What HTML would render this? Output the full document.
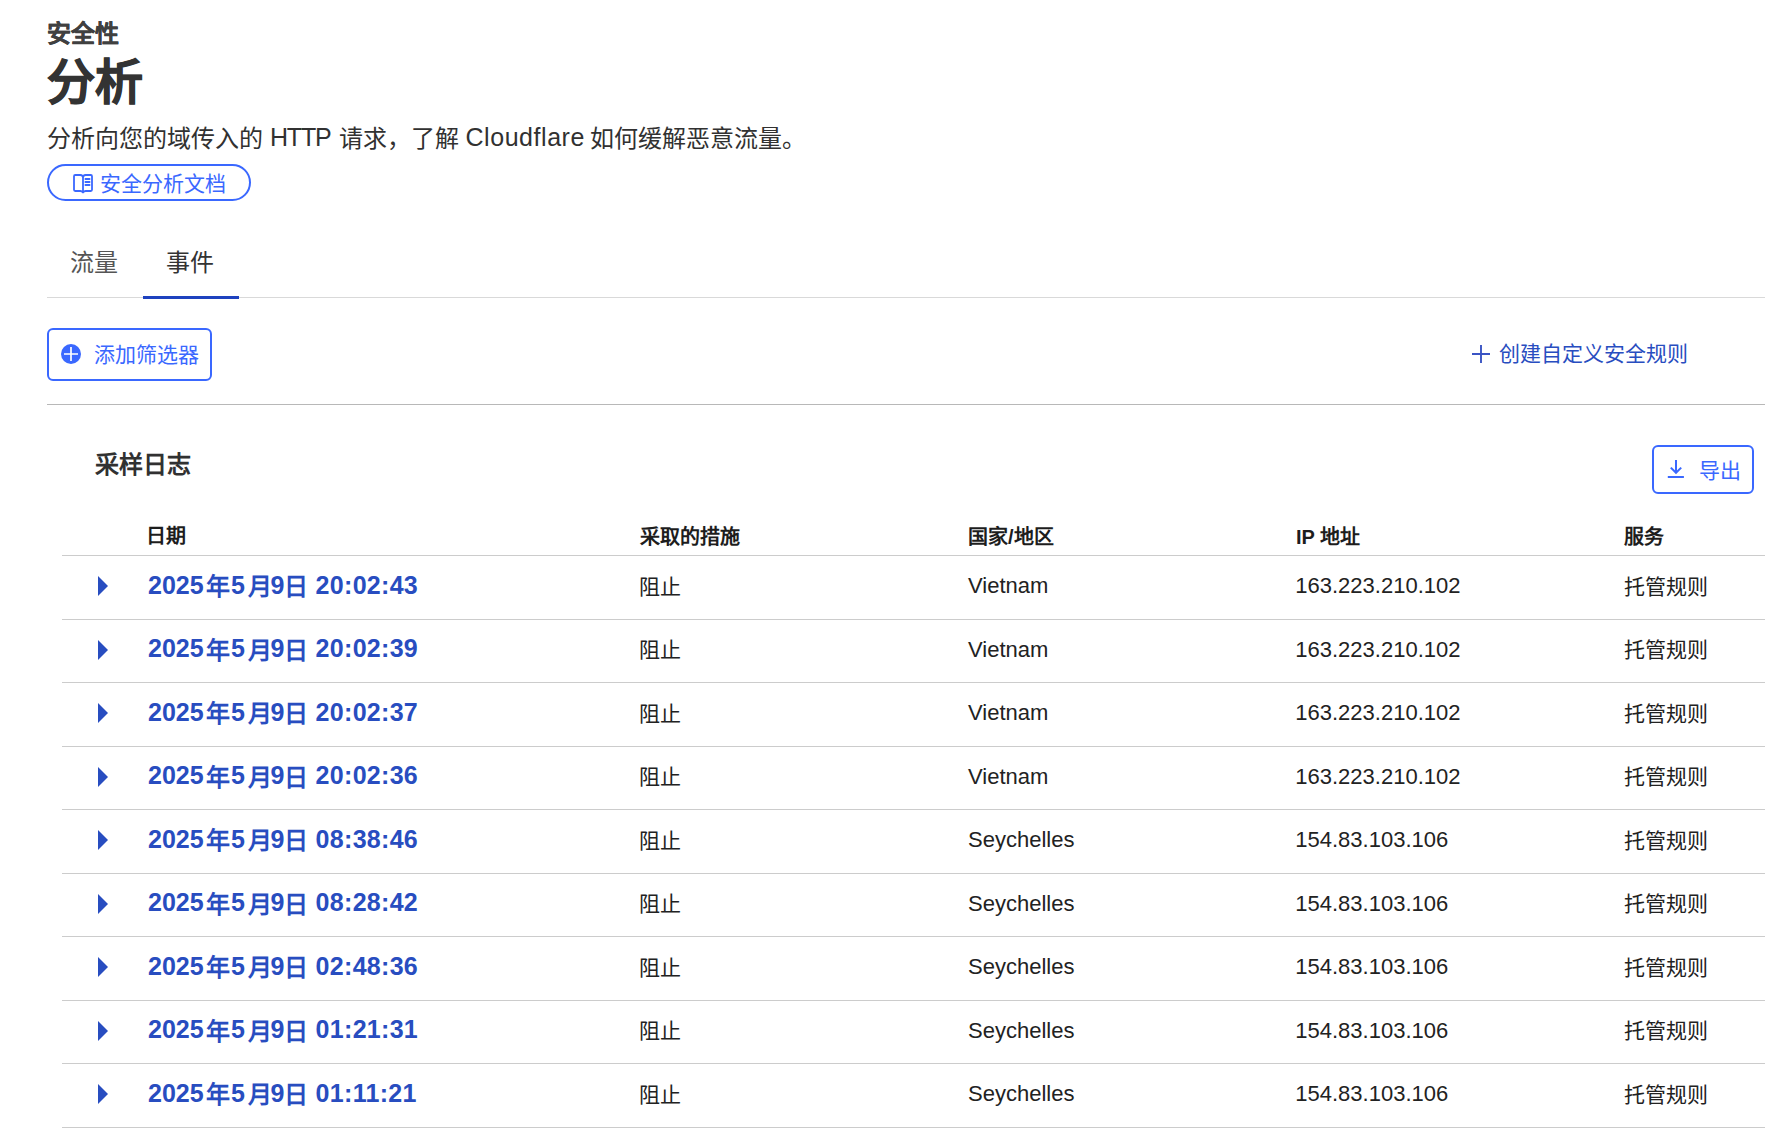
<!DOCTYPE html>
<html lang="zh-CN">
<head>
<meta charset="utf-8">
<style>
html,body{margin:0;padding:0;background:#fff;}
body{width:1765px;height:1138px;overflow:hidden;position:relative;font-family:"Liberation Sans",sans-serif;color:#313131;}
.a{position:absolute;white-space:nowrap;}
.s24{font-size:24px;line-height:30px;}
.s21{font-size:21px;line-height:26px;}
.b{font-weight:bold;}
.btn{position:absolute;box-sizing:border-box;border:2px solid #3a68ff;}
.blue{color:#3a68ff;}
.dk{color:#284dc0;}
.th{font-size:20px;line-height:26px;font-weight:bold;color:#1d1d1d;}
.ln{position:absolute;height:1px;background:#cccccc;}
.dg{font-size:25px;line-height:30px;font-weight:bold;color:#284dc0;}
.dc{font-size:24px;line-height:30px;font-weight:bold;color:#284dc0;}
.ct{font-size:21px;line-height:26px;color:#222;}
.lt{font-size:22px;line-height:26px;color:#222;}
.caret{position:absolute;width:0;height:0;border-top:10px solid transparent;border-bottom:10px solid transparent;border-left:10.5px solid #284dc0;}
</style>
</head>
<body>
<div class="a s24 b" style="left:46.5px;top:19px;color:#404040;-webkit-text-stroke:0.3px #404040">安全性</div>
<div class="a b" style="left:47px;top:53px;font-size:48px;line-height:60px;color:#333;-webkit-text-stroke:0.9px #333">分析</div>
<div class="a s24" style="left:46.9px;top:124px;">分析向您的域传入的</div>
<div class="a " style="left:270px;top:122px;font-size:25px;line-height:30px;letter-spacing:-1.2px">HTTP</div>
<div class="a s24" style="left:339.3px;top:124px;">请求，了解</div>
<div class="a " style="left:465.5px;top:122px;font-size:25px;line-height:30px;letter-spacing:0.55px">Cloudflare</div>
<div class="a s24" style="left:590px;top:124px;">如何缓解恶意流量。</div>
<div class="btn" style="left:47px;top:164px;width:204px;height:37px;border-radius:19px"></div>
<svg class="a" style="left:73px;top:174px" width="20" height="20" viewBox="0 0 20 20" fill="none" stroke="#3a68ff" stroke-width="1.8" stroke-linejoin="round" stroke-linecap="round"><path d="M10 3.6Q10 1 7.4 1H2.2Q1 1 1 2.2V15.8Q1 17 2.2 17H7.4Q8.8 17 10 18.4Q11.2 17 12.6 17H17.8Q19 17 19 15.8V2.2Q19 1 17.8 1H12.6Q10 1 10 3.6V18.4"/><path d="M12.4 5H16.6M12.4 8H16.6M12.4 11H16.6"/></svg>
<div class="a s21 blue" style="left:100.2px;top:171.4px;">安全分析文档</div>
<div class="a s24" style="left:70.3px;top:248px;color:#555">流量</div>
<div class="a s24" style="left:166px;top:248px;color:#333">事件</div>
<div class="ln" style="left:47px;top:297px;width:1718px;background:#d9d9d9"></div>
<div class="a" style="left:143px;top:296px;width:96px;height:3px;background:#1e42bf"></div>
<div class="btn" style="left:47px;top:328px;width:165px;height:53px;border-radius:6px"></div>
<svg class="a" style="left:61px;top:344px" width="20" height="20" viewBox="0 0 20 20"><circle cx="10" cy="10" r="10" fill="#3a68ff"/><path d="M10 3v14M3 10h14" stroke="#fff" stroke-width="1.7"/></svg>
<div class="a s21 blue" style="left:94px;top:342px;">添加筛选器</div>
<svg class="a" style="left:1472px;top:345px" width="18" height="18" viewBox="0 0 18 18"><path d="M9 0v18M0 9h18" stroke="#3a54c4" stroke-width="1.9"/></svg>
<div class="a s21 dk" style="left:1498.8px;top:341px;">创建自定义安全规则</div>
<div class="ln" style="left:47px;top:404px;width:1718px;background:#b8b8b8"></div>
<div class="a s24 b" style="left:95.2px;top:450px;">采样日志</div>
<div class="btn" style="left:1652px;top:445px;width:102px;height:49px;border-radius:6px"></div>
<svg class="a" style="left:1666px;top:458px" width="20" height="22" viewBox="0 0 20 22" fill="none" stroke="#3a68ff" stroke-width="2" stroke-linecap="butt" stroke-linejoin="miter"><path d="M10 2V15M4.8 9.6L10 14.8L15.2 9.6M1.8 19H17.9"/></svg>
<div class="a s21 blue" style="left:1699px;top:457.6px;">导出</div>
<div class="a th" style="left:145.7px;top:523px;">日期</div>
<div class="a th" style="left:640.4px;top:524px;">采取的措施</div>
<div class="a th" style="left:968px;top:524px;">国家/地区</div>
<div class="a th" style="left:1296px;top:524px;">IP 地址</div>
<div class="a th" style="left:1624px;top:524px;">服务</div>
<div class="ln" style="left:62px;top:555px;width:1703px"></div>
<div class="caret" style="left:98px;top:576.0px"></div>
<div class="a dg" style="left:148px;top:569.7px;">2025</div>
<div class="a dc" style="left:206.4px;top:572.0px;">年</div>
<div class="a dg" style="left:231px;top:569.7px;">5</div>
<div class="a dc" style="left:247.6px;top:572.0px;">月</div>
<div class="a dg" style="left:270.4px;top:569.7px;">9</div>
<div class="a dc" style="left:284px;top:572.0px;">日</div>
<div class="a dg" style="left:315.6px;top:569.7px;letter-spacing:0.3px">20:02:43</div>
<div class="a ct" style="left:639.4px;top:573.8px;">阻止</div>
<div class="a lt" style="left:968px;top:573.0px;">Vietnam</div>
<div class="a lt" style="left:1295.3px;top:573.0px;">163.223.210.102</div>
<div class="a ct" style="left:1623.8px;top:573.8px;">托管规则</div>
<div class="ln" style="left:62px;top:619px;width:1703px"></div>
<div class="caret" style="left:98px;top:639.5px"></div>
<div class="a dg" style="left:148px;top:633.2px;">2025</div>
<div class="a dc" style="left:206.4px;top:635.5px;">年</div>
<div class="a dg" style="left:231px;top:633.2px;">5</div>
<div class="a dc" style="left:247.6px;top:635.5px;">月</div>
<div class="a dg" style="left:270.4px;top:633.2px;">9</div>
<div class="a dc" style="left:284px;top:635.5px;">日</div>
<div class="a dg" style="left:315.6px;top:633.2px;letter-spacing:0.3px">20:02:39</div>
<div class="a ct" style="left:639.4px;top:637.3px;">阻止</div>
<div class="a lt" style="left:968px;top:636.5px;">Vietnam</div>
<div class="a lt" style="left:1295.3px;top:636.5px;">163.223.210.102</div>
<div class="a ct" style="left:1623.8px;top:637.3px;">托管规则</div>
<div class="ln" style="left:62px;top:682px;width:1703px"></div>
<div class="caret" style="left:98px;top:703.0px"></div>
<div class="a dg" style="left:148px;top:696.7px;">2025</div>
<div class="a dc" style="left:206.4px;top:699.0px;">年</div>
<div class="a dg" style="left:231px;top:696.7px;">5</div>
<div class="a dc" style="left:247.6px;top:699.0px;">月</div>
<div class="a dg" style="left:270.4px;top:696.7px;">9</div>
<div class="a dc" style="left:284px;top:699.0px;">日</div>
<div class="a dg" style="left:315.6px;top:696.7px;letter-spacing:0.3px">20:02:37</div>
<div class="a ct" style="left:639.4px;top:700.8px;">阻止</div>
<div class="a lt" style="left:968px;top:700.0px;">Vietnam</div>
<div class="a lt" style="left:1295.3px;top:700.0px;">163.223.210.102</div>
<div class="a ct" style="left:1623.8px;top:700.8px;">托管规则</div>
<div class="ln" style="left:62px;top:746px;width:1703px"></div>
<div class="caret" style="left:98px;top:766.5px"></div>
<div class="a dg" style="left:148px;top:760.2px;">2025</div>
<div class="a dc" style="left:206.4px;top:762.5px;">年</div>
<div class="a dg" style="left:231px;top:760.2px;">5</div>
<div class="a dc" style="left:247.6px;top:762.5px;">月</div>
<div class="a dg" style="left:270.4px;top:760.2px;">9</div>
<div class="a dc" style="left:284px;top:762.5px;">日</div>
<div class="a dg" style="left:315.6px;top:760.2px;letter-spacing:0.3px">20:02:36</div>
<div class="a ct" style="left:639.4px;top:764.3px;">阻止</div>
<div class="a lt" style="left:968px;top:763.5px;">Vietnam</div>
<div class="a lt" style="left:1295.3px;top:763.5px;">163.223.210.102</div>
<div class="a ct" style="left:1623.8px;top:764.3px;">托管规则</div>
<div class="ln" style="left:62px;top:809px;width:1703px"></div>
<div class="caret" style="left:98px;top:830.0px"></div>
<div class="a dg" style="left:148px;top:823.7px;">2025</div>
<div class="a dc" style="left:206.4px;top:826.0px;">年</div>
<div class="a dg" style="left:231px;top:823.7px;">5</div>
<div class="a dc" style="left:247.6px;top:826.0px;">月</div>
<div class="a dg" style="left:270.4px;top:823.7px;">9</div>
<div class="a dc" style="left:284px;top:826.0px;">日</div>
<div class="a dg" style="left:315.6px;top:823.7px;letter-spacing:0.3px">08:38:46</div>
<div class="a ct" style="left:639.4px;top:827.8px;">阻止</div>
<div class="a lt" style="left:968px;top:827.0px;">Seychelles</div>
<div class="a lt" style="left:1295.3px;top:827.0px;">154.83.103.106</div>
<div class="a ct" style="left:1623.8px;top:827.8px;">托管规则</div>
<div class="ln" style="left:62px;top:873px;width:1703px"></div>
<div class="caret" style="left:98px;top:893.5px"></div>
<div class="a dg" style="left:148px;top:887.2px;">2025</div>
<div class="a dc" style="left:206.4px;top:889.5px;">年</div>
<div class="a dg" style="left:231px;top:887.2px;">5</div>
<div class="a dc" style="left:247.6px;top:889.5px;">月</div>
<div class="a dg" style="left:270.4px;top:887.2px;">9</div>
<div class="a dc" style="left:284px;top:889.5px;">日</div>
<div class="a dg" style="left:315.6px;top:887.2px;letter-spacing:0.3px">08:28:42</div>
<div class="a ct" style="left:639.4px;top:891.3px;">阻止</div>
<div class="a lt" style="left:968px;top:890.5px;">Seychelles</div>
<div class="a lt" style="left:1295.3px;top:890.5px;">154.83.103.106</div>
<div class="a ct" style="left:1623.8px;top:891.3px;">托管规则</div>
<div class="ln" style="left:62px;top:936px;width:1703px"></div>
<div class="caret" style="left:98px;top:957.0px"></div>
<div class="a dg" style="left:148px;top:950.7px;">2025</div>
<div class="a dc" style="left:206.4px;top:953.0px;">年</div>
<div class="a dg" style="left:231px;top:950.7px;">5</div>
<div class="a dc" style="left:247.6px;top:953.0px;">月</div>
<div class="a dg" style="left:270.4px;top:950.7px;">9</div>
<div class="a dc" style="left:284px;top:953.0px;">日</div>
<div class="a dg" style="left:315.6px;top:950.7px;letter-spacing:0.3px">02:48:36</div>
<div class="a ct" style="left:639.4px;top:954.8px;">阻止</div>
<div class="a lt" style="left:968px;top:954.0px;">Seychelles</div>
<div class="a lt" style="left:1295.3px;top:954.0px;">154.83.103.106</div>
<div class="a ct" style="left:1623.8px;top:954.8px;">托管规则</div>
<div class="ln" style="left:62px;top:1000px;width:1703px"></div>
<div class="caret" style="left:98px;top:1020.5px"></div>
<div class="a dg" style="left:148px;top:1014.2px;">2025</div>
<div class="a dc" style="left:206.4px;top:1016.5px;">年</div>
<div class="a dg" style="left:231px;top:1014.2px;">5</div>
<div class="a dc" style="left:247.6px;top:1016.5px;">月</div>
<div class="a dg" style="left:270.4px;top:1014.2px;">9</div>
<div class="a dc" style="left:284px;top:1016.5px;">日</div>
<div class="a dg" style="left:315.6px;top:1014.2px;letter-spacing:0.3px">01:21:31</div>
<div class="a ct" style="left:639.4px;top:1018.3px;">阻止</div>
<div class="a lt" style="left:968px;top:1017.5px;">Seychelles</div>
<div class="a lt" style="left:1295.3px;top:1017.5px;">154.83.103.106</div>
<div class="a ct" style="left:1623.8px;top:1018.3px;">托管规则</div>
<div class="ln" style="left:62px;top:1063px;width:1703px"></div>
<div class="caret" style="left:98px;top:1084.0px"></div>
<div class="a dg" style="left:148px;top:1077.7px;">2025</div>
<div class="a dc" style="left:206.4px;top:1080.0px;">年</div>
<div class="a dg" style="left:231px;top:1077.7px;">5</div>
<div class="a dc" style="left:247.6px;top:1080.0px;">月</div>
<div class="a dg" style="left:270.4px;top:1077.7px;">9</div>
<div class="a dc" style="left:284px;top:1080.0px;">日</div>
<div class="a dg" style="left:315.6px;top:1077.7px;letter-spacing:0.3px">01:11:21</div>
<div class="a ct" style="left:639.4px;top:1081.8px;">阻止</div>
<div class="a lt" style="left:968px;top:1081.0px;">Seychelles</div>
<div class="a lt" style="left:1295.3px;top:1081.0px;">154.83.103.106</div>
<div class="a ct" style="left:1623.8px;top:1081.8px;">托管规则</div>
<div class="ln" style="left:62px;top:1127px;width:1703px"></div>
</body>
</html>
